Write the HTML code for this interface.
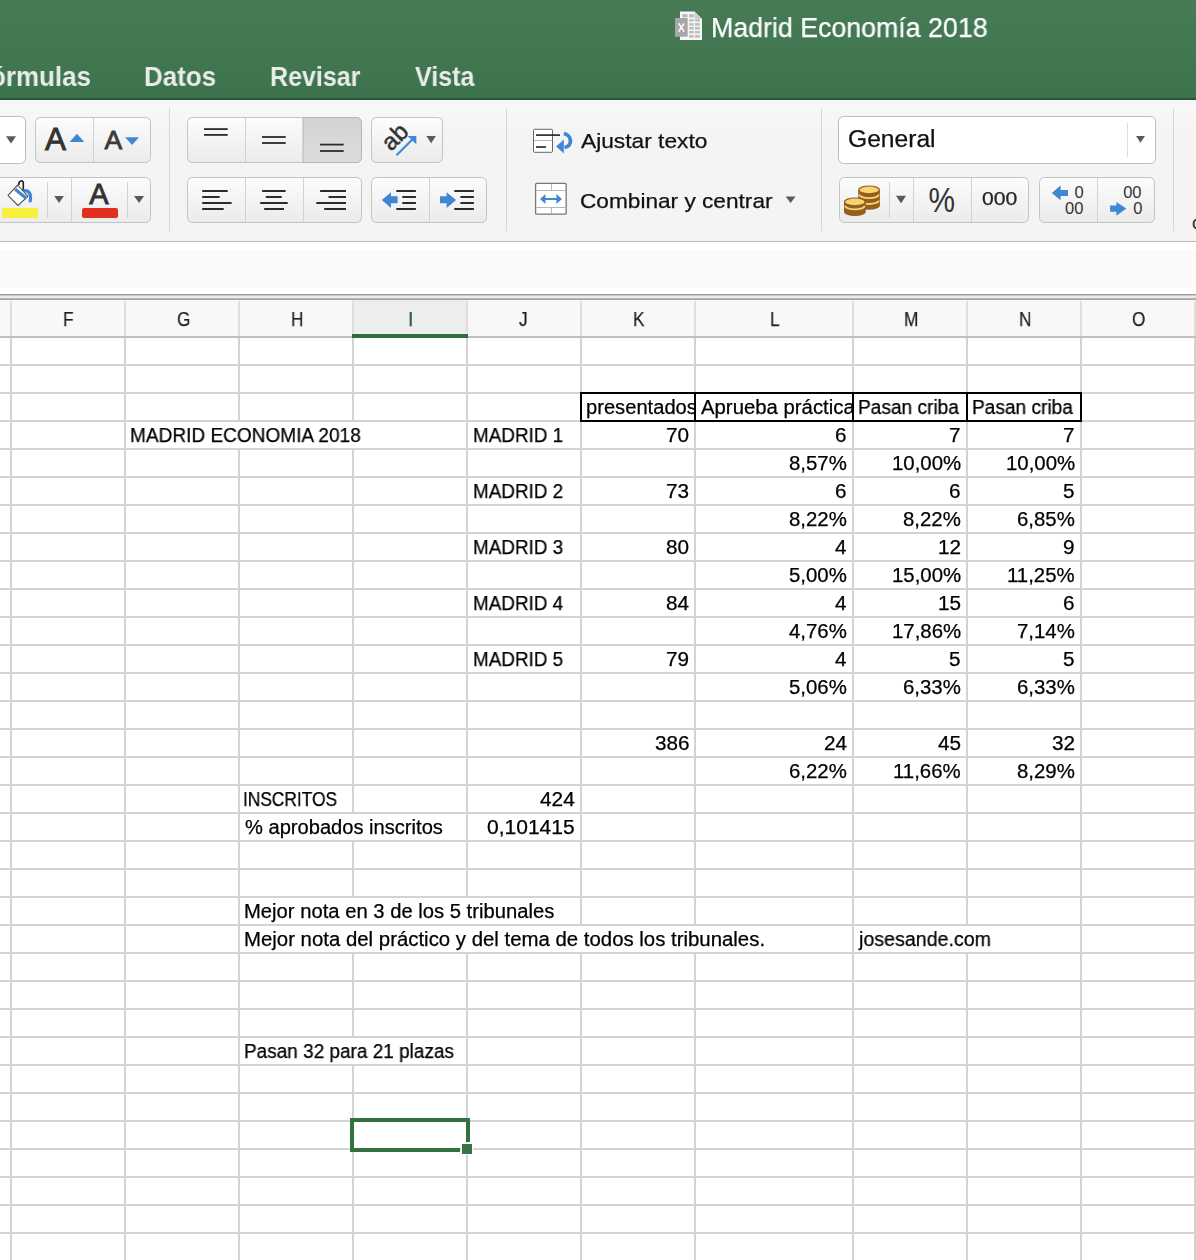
<!DOCTYPE html>
<html><head><meta charset="utf-8"><title>Madrid Economía 2018</title>
<style>
html,body{margin:0;padding:0}
body{width:1196px;height:1260px;overflow:hidden;position:relative;background:#fff;font-family:"Liberation Sans",sans-serif}
.a{position:absolute}
.t{position:absolute;white-space:pre;transform-origin:0 0;will-change:transform;-webkit-text-stroke:0.25px currentColor}
</style></head><body>
<div class="a" style="left:0;top:0;width:1196px;height:100px;background:linear-gradient(#467b56,#3d734c)"></div>
<div class="a" style="left:0;top:98px;width:1196px;height:2px;background:#27583a"></div>
<div class="a" style="left:0;top:100px;width:1196px;height:141px;background:linear-gradient(#f8f8f8 0px,#f4f4f4 34px,#f4f4f4 141px)"></div>
<div class="a" style="left:0;top:241px;width:1196px;height:1px;background:#bdbdbd"></div>
<div class="a" style="left:0;top:242px;width:1196px;height:52px;background:#fff"></div>
<div class="a" style="left:0;top:250px;width:1196px;height:38px;background:#fafafa"></div>
<div class="a" style="left:0;top:294px;width:1196px;height:1px;background:#9a9a9a"></div>
<div class="a" style="left:0;top:295px;width:1196px;height:1px;background:#c9c9c9"></div>
<div class="a" style="left:0;top:296px;width:1196px;height:2px;background:#ececec"></div>
<div class="a" style="left:0;top:298px;width:1196px;height:1px;background:#b8b8b8"></div>
<div class="a" style="left:0;top:299px;width:1196px;height:1px;background:#a2a2a2"></div>
<div class="a" style="left:0;top:300px;width:1196px;height:36px;background:#f8f8f8"></div>
<div class="a" style="left:352px;top:300px;width:116px;height:36px;background:#ededed"></div>
<div class="a" style="left:0;top:336px;width:1196px;height:2px;background:#bfbfbf"></div>
<svg class="a" style="left:0;top:100px" width="1196" height="141" viewBox="0 100 1196 141">
<defs><linearGradient id="bg" x1="0" y1="0" x2="0" y2="1"><stop offset="0" stop-color="#fcfcfc"/><stop offset="1" stop-color="#ebebeb"/></linearGradient><linearGradient id="pr" x1="0" y1="0" x2="0" y2="1"><stop offset="0" stop-color="#d3d3d3"/><stop offset="1" stop-color="#dcdcdc"/></linearGradient></defs>
<rect x="169" y="108" width="1" height="123" fill="#d7d7d7"/>
<rect x="506" y="108" width="1" height="123" fill="#d7d7d7"/>
<rect x="821" y="108" width="1" height="123" fill="#d7d7d7"/>
<rect x="1173" y="108" width="1" height="123" fill="#d7d7d7"/>
<rect x="-9.5" y="116.5" width="35" height="47" rx="5" fill="#fff" stroke="#bdbdbd" stroke-width="1"/>
<polygon points="6,136.3 16,136.3 11.0,143.4" fill="#5b5b5b"/>
<rect x="35.5" y="117.5" width="115" height="45" rx="5" fill="url(#bg)" stroke="#c3c3c3" stroke-width="1"/>
<rect x="93" y="118" width="1" height="44" fill="#d2d2d2"/>
<text x="45" y="150" font-family="Liberation Sans" font-size="31.5" fill="#333" stroke="#333" stroke-width="0.9">A</text>
<polygon points="69.6,142.1 84.3,142.1 76.94999999999999,133.8" fill="#3f86d3"/>
<text x="104.6" y="149.2" font-family="Liberation Sans" font-size="26.5" fill="#3a3a3a" stroke="#3a3a3a" stroke-width="0.8">A</text>
<polygon points="125.1,137.2 139.1,137.2 132.1,145" fill="#3f86d3"/>
<rect x="-9.5" y="177.5" width="160" height="45" rx="5" fill="url(#bg)" stroke="#c3c3c3" stroke-width="1"/>
<rect x="47" y="182" width="1" height="36" fill="#d2d2d2"/>
<rect x="71" y="178" width="1" height="44" fill="#d2d2d2"/>
<rect x="127" y="182" width="1" height="36" fill="#d2d2d2"/>
<polygon points="8,195.4 17.7,185 27.8,196.4 18,205.5" fill="#fff" stroke="#555" stroke-width="1.1" stroke-linejoin="round"/>
<line x1="15.2" y1="189.2" x2="26.4" y2="198.4" stroke="#3f86d3" stroke-width="3.2"/>
<path d="M19,185 C18,181 22.5,179.5 23.3,182.5 L23.3,191" fill="none" stroke="#222" stroke-width="1.6"/>
<path d="M24.6,190.6 C29,190.5 31.5,194 30.2,201" fill="none" stroke="#3f86d3" stroke-width="3.2" stroke-linecap="round"/>
<rect x="2" y="208" width="36" height="10" rx="1.5" fill="#f6f03c"/>
<polygon points="54.2,196.1 63.9,196.1 59.05,203.1" fill="#5b5b5b"/>
<text x="89.2" y="204" font-family="Liberation Sans" font-size="29" fill="#333" stroke="#333" stroke-width="0.9">A</text>
<rect x="82" y="208" width="36" height="10" rx="2" fill="#e2301e"/>
<polygon points="134,196 144.1,196 139.05,203.1" fill="#5b5b5b"/>
<rect x="187.5" y="117.5" width="174" height="45" rx="5" fill="url(#bg)" stroke="#c3c3c3" stroke-width="1"/>
<path d="M303,117.5 H356.5 A5,5 0 0 1 361.5,122.5 V157.5 A5,5 0 0 1 356.5,162.5 H303 Z" fill="url(#pr)" stroke="#b5b5b5" stroke-width="1"/>
<rect x="245" y="118" width="1" height="44" fill="#d2d2d2"/>
<rect x="204" y="128.2" width="23.69999999999999" height="1.8" fill="#2b2b2b"/>
<rect x="204" y="134" width="23.69999999999999" height="1.8" fill="#2b2b2b"/>
<rect x="262" y="136.1" width="23.69999999999999" height="1.8" fill="#2b2b2b"/>
<rect x="262" y="142.1" width="23.69999999999999" height="1.8" fill="#2b2b2b"/>
<rect x="320" y="143.7" width="23.69999999999999" height="1.8" fill="#2b2b2b"/>
<rect x="320" y="150.1" width="23.69999999999999" height="1.8" fill="#2b2b2b"/>
<rect x="371.5" y="117.5" width="71" height="45" rx="5" fill="url(#bg)" stroke="#c3c3c3" stroke-width="1"/>
<text x="0" y="0" font-family="Liberation Sans" font-size="24" fill="#333" stroke="#333" stroke-width="0.5" transform="translate(391,152) rotate(-45)">ab</text>
<line x1="396.5" y1="155.3" x2="412" y2="139.8" stroke="#3f86d3" stroke-width="2.2"/>
<polygon points="407.5,136 416.3,136 416.3,144.3" fill="#3f86d3"/>
<polygon points="426.4,136 435.9,136 431.15,143.2" fill="#5b5b5b"/>
<rect x="187.5" y="177.5" width="174" height="45" rx="5" fill="url(#bg)" stroke="#c3c3c3" stroke-width="1"/>
<rect x="245" y="178" width="1" height="44" fill="#d2d2d2"/>
<rect x="303" y="178" width="1" height="44" fill="#d2d2d2"/>
<rect x="202.2" y="190" width="25.5" height="2" fill="#2b2b2b"/>
<rect x="202.2" y="196" width="17.5" height="2" fill="#2b2b2b"/>
<rect x="202.2" y="202" width="29.400000000000006" height="2" fill="#2b2b2b"/>
<rect x="202.2" y="208" width="21.5" height="2" fill="#2b2b2b"/>
<rect x="262.1" y="190" width="23.5" height="2" fill="#2b2b2b"/>
<rect x="265.8" y="196" width="15.899999999999977" height="2" fill="#2b2b2b"/>
<rect x="260.2" y="202" width="27.5" height="2" fill="#2b2b2b"/>
<rect x="264.2" y="208" width="19.80000000000001" height="2" fill="#2b2b2b"/>
<rect x="320.1" y="190" width="25.899999999999977" height="2" fill="#2b2b2b"/>
<rect x="328.5" y="196" width="17.5" height="2" fill="#2b2b2b"/>
<rect x="316.3" y="202" width="29.69999999999999" height="2" fill="#2b2b2b"/>
<rect x="324.2" y="208" width="21.80000000000001" height="2" fill="#2b2b2b"/>
<rect x="371.5" y="177.5" width="115" height="45" rx="5" fill="url(#bg)" stroke="#c3c3c3" stroke-width="1"/>
<rect x="429" y="178" width="1" height="44" fill="#d2d2d2"/>
<polygon points="381.8,199.9 391,192.3 391,196.3 397.6,196.3 397.6,203.3 391,203.3 391,208 " fill="#3f86d3"/>
<rect x="396.3" y="190" width="19.599999999999966" height="2" fill="#2b2b2b"/>
<rect x="402.3" y="196" width="13.599999999999966" height="2" fill="#2b2b2b"/>
<rect x="402.3" y="202" width="13.599999999999966" height="2" fill="#2b2b2b"/>
<rect x="396.3" y="208" width="19.599999999999966" height="2" fill="#2b2b2b"/>
<polygon points="456.1,199.9 446.6,192.3 446.6,196.3 440,196.3 440,203.3 446.6,203.3 446.6,208" fill="#3f86d3"/>
<rect x="454.3" y="190" width="19.599999999999966" height="2" fill="#2b2b2b"/>
<rect x="460.4" y="196" width="13.5" height="2" fill="#2b2b2b"/>
<rect x="460.4" y="202" width="13.5" height="2" fill="#2b2b2b"/>
<rect x="454.3" y="208" width="19.599999999999966" height="2" fill="#2b2b2b"/>
<rect x="533.5" y="129.3" width="19" height="23" rx="1" fill="#fff" stroke="#666" stroke-width="1"/>
<rect x="534" y="140" width="18" height="1" fill="#b5b5b5"/>
<rect x="536" y="134.3" width="24" height="1.6" fill="#222"/>
<rect x="536" y="146.2" width="10" height="1.6" fill="#222"/>
<path d="M563.8,133.6 C571.5,134.5 573.5,146 564.5,147.5" fill="none" stroke="#3f86d3" stroke-width="3.8"/>
<polygon points="556.2,146.6 563.8,139.6 563.8,153.6" fill="#3f86d3"/>
<rect x="535.6" y="183.4" width="30.6" height="30.8" rx="1" fill="#fff" stroke="#777" stroke-width="1.3"/>
<rect x="536" y="190" width="30" height="1" fill="#b8b8b8"/><rect x="536" y="207" width="30" height="1" fill="#b8b8b8"/>
<rect x="551" y="184" width="1" height="6" fill="#b8b8b8"/><rect x="551" y="208" width="1" height="6" fill="#b8b8b8"/>
<polygon points="540,199.1 545.5,194 545.5,198.1 556.4,198.1 556.4,194 561.9,199.1 556.4,204 556.4,200.1 545.5,200.1 545.5,204" fill="#3f86d3"/>
<polygon points="785.6,196.6 795.6,196.6 790.6,203" fill="#5b5b5b"/>
<rect x="838.5" y="116.5" width="317" height="47" rx="5" fill="#fff" stroke="#bdbdbd" stroke-width="1"/>
<rect x="1127" y="123" width="1" height="34" fill="#dedede"/>
<polygon points="1136,136 1145,136 1140.5,142.8" fill="#5b5b5b"/>
<rect x="839.5" y="177.5" width="189" height="45" rx="5" fill="url(#bg)" stroke="#c3c3c3" stroke-width="1"/>
<rect x="889" y="182" width="1" height="36" fill="#d2d2d2"/>
<rect x="913" y="178" width="1" height="44" fill="#d2d2d2"/>
<rect x="971" y="178" width="1" height="44" fill="#d2d2d2"/>
<path d="M858.2,189.9 V205.7 A10.849999999999966,4 0 0 0 879.9,205.7 V189.9 Z" fill="#925f20"/><path d="M859.4000000000001,194.6 A9.649999999999967,3.6 0 0 0 878.6999999999999,194.6" fill="none" stroke="#f5d471" stroke-width="1.8"/><path d="M859.4000000000001,200.4 A9.649999999999967,3.6 0 0 0 878.6999999999999,200.4" fill="none" stroke="#f5d471" stroke-width="1.8"/><ellipse cx="869.05" cy="189.9" rx="10.249999999999966" ry="3.9" fill="#f5d471" stroke="#925f20" stroke-width="1.2"/>
<path d="M844,201.9 V211.9 A10.899999999999977,4 0 0 0 865.8,211.9 V201.9 Z" fill="#925f20"/><path d="M845.2,205.8 A9.699999999999978,3.6 0 0 0 864.5999999999999,205.8" fill="none" stroke="#f5d471" stroke-width="1.8"/><ellipse cx="854.9" cy="201.9" rx="10.299999999999978" ry="3.9" fill="#f5d471" stroke="#925f20" stroke-width="1.2"/>
<polygon points="896,195.8 906,195.8 901.0,203.4" fill="#5b5b5b"/>
<text x="928.4" y="211.8" font-family="Liberation Sans" font-size="35" fill="#333" textLength="26.5" lengthAdjust="spacingAndGlyphs">%</text>
<rect x="1039.5" y="177.5" width="115" height="45" rx="5" fill="url(#bg)" stroke="#c3c3c3" stroke-width="1"/>
<rect x="1097" y="178" width="1" height="44" fill="#d2d2d2"/>
<polygon points="1051.8,192.9 1060.6,185.5 1060.6,189.9 1068,189.9 1068,196 1060.6,196 1060.6,200.3" fill="#3f86d3"/>
<polygon points="1126.3,208.6 1116.4,201.9 1116.4,205.6 1110.1,205.6 1110.1,211.8 1116.4,211.8 1116.4,215.7" fill="#3f86d3"/>
<text x="1074.6" y="197.8" font-family="Liberation Sans" font-size="16.5" fill="#333">0</text>
<text x="1065" y="213.9" font-family="Liberation Sans" font-size="16.5" fill="#333">00</text>
<text x="1123.2" y="197.8" font-family="Liberation Sans" font-size="16.5" fill="#333">00</text>
<text x="1133.2" y="213.9" font-family="Liberation Sans" font-size="16.5" fill="#333">0</text>
<text x="1192" y="228.8" font-family="Liberation Sans" font-size="18" fill="#222">c</text>
</svg><svg class="a" style="left:0;top:0" width="1196" height="100"><polygon points="680,11.5 694.5,11.5 702,19 702,40 680,40" fill="#f7f7f7"/><polygon points="694.5,11.5 694.5,19 702,19" fill="#cfcfcf"/><rect x="682.2" y="14.1" width="5.2999999999999545" height="3.3" fill="#b9b9b9"/><rect x="689.2" y="14.1" width="4.599999999999909" height="3.3" fill="#b9b9b9"/><rect x="689.2" y="19.2" width="4.599999999999909" height="2.400000000000002" fill="#bdbdbd"/><rect x="695" y="19.2" width="4.7999999999999545" height="2.400000000000002" fill="#bdbdbd"/><rect x="689.2" y="23.1" width="4.599999999999909" height="2.599999999999998" fill="#bdbdbd"/><rect x="695" y="23.1" width="4.7999999999999545" height="2.599999999999998" fill="#bdbdbd"/><rect x="689.2" y="27" width="4.599999999999909" height="2.5" fill="#bdbdbd"/><rect x="695" y="27" width="4.7999999999999545" height="2.5" fill="#bdbdbd"/><rect x="689.2" y="31" width="4.599999999999909" height="2.3999999999999986" fill="#bdbdbd"/><rect x="695" y="31" width="4.7999999999999545" height="2.3999999999999986" fill="#bdbdbd"/><rect x="689.2" y="35" width="4.599999999999909" height="2.6000000000000014" fill="#bdbdbd"/><rect x="695" y="35" width="4.7999999999999545" height="2.6000000000000014" fill="#bdbdbd"/><rect x="675" y="18.1" width="12.7" height="18.6" rx="0.8" fill="#a8a8a8"/><path d="M678.6,23.4 L684.2,31.6 M684.2,23.4 L678.6,31.6" stroke="#fff" stroke-width="1.6"/></svg>
<svg class="a" style="left:0;top:0" width="1196" height="1260" shape-rendering="crispEdges">
<rect x="0" y="364" width="1196" height="2" fill="#d3d3d3"/>
<rect x="0" y="392" width="1196" height="2" fill="#d3d3d3"/>
<rect x="0" y="420" width="1196" height="2" fill="#d3d3d3"/>
<rect x="0" y="448" width="1196" height="2" fill="#d3d3d3"/>
<rect x="0" y="476" width="1196" height="2" fill="#d3d3d3"/>
<rect x="0" y="504" width="1196" height="2" fill="#d3d3d3"/>
<rect x="0" y="532" width="1196" height="2" fill="#d3d3d3"/>
<rect x="0" y="560" width="1196" height="2" fill="#d3d3d3"/>
<rect x="0" y="588" width="1196" height="2" fill="#d3d3d3"/>
<rect x="0" y="616" width="1196" height="2" fill="#d3d3d3"/>
<rect x="0" y="644" width="1196" height="2" fill="#d3d3d3"/>
<rect x="0" y="672" width="1196" height="2" fill="#d3d3d3"/>
<rect x="0" y="700" width="1196" height="2" fill="#d3d3d3"/>
<rect x="0" y="728" width="1196" height="2" fill="#d3d3d3"/>
<rect x="0" y="756" width="1196" height="2" fill="#d3d3d3"/>
<rect x="0" y="784" width="1196" height="2" fill="#d3d3d3"/>
<rect x="0" y="812" width="1196" height="2" fill="#d3d3d3"/>
<rect x="0" y="840" width="1196" height="2" fill="#d3d3d3"/>
<rect x="0" y="868" width="1196" height="2" fill="#d3d3d3"/>
<rect x="0" y="896" width="1196" height="2" fill="#d3d3d3"/>
<rect x="0" y="924" width="1196" height="2" fill="#d3d3d3"/>
<rect x="0" y="952" width="1196" height="2" fill="#d3d3d3"/>
<rect x="0" y="980" width="1196" height="2" fill="#d3d3d3"/>
<rect x="0" y="1008" width="1196" height="2" fill="#d3d3d3"/>
<rect x="0" y="1036" width="1196" height="2" fill="#d3d3d3"/>
<rect x="0" y="1064" width="1196" height="2" fill="#d3d3d3"/>
<rect x="0" y="1092" width="1196" height="2" fill="#d3d3d3"/>
<rect x="0" y="1120" width="1196" height="2" fill="#d3d3d3"/>
<rect x="0" y="1148" width="1196" height="2" fill="#d3d3d3"/>
<rect x="0" y="1176" width="1196" height="2" fill="#d3d3d3"/>
<rect x="0" y="1204" width="1196" height="2" fill="#d3d3d3"/>
<rect x="0" y="1232" width="1196" height="2" fill="#d3d3d3"/>
<rect x="10" y="338" width="2" height="922" fill="#d3d3d3"/>
<rect x="124" y="338" width="2" height="922" fill="#d3d3d3"/>
<rect x="238" y="338" width="2" height="922" fill="#d3d3d3"/>
<rect x="238" y="422" width="2" height="26" fill="#fff"/>
<rect x="352" y="338" width="2" height="922" fill="#d3d3d3"/>
<rect x="352" y="422" width="2" height="26" fill="#fff"/>
<rect x="352" y="814" width="2" height="26" fill="#fff"/>
<rect x="352" y="898" width="2" height="26" fill="#fff"/>
<rect x="352" y="926" width="2" height="26" fill="#fff"/>
<rect x="352" y="1038" width="2" height="26" fill="#fff"/>
<rect x="466" y="338" width="2" height="922" fill="#d3d3d3"/>
<rect x="466" y="898" width="2" height="26" fill="#fff"/>
<rect x="466" y="926" width="2" height="26" fill="#fff"/>
<rect x="580" y="338" width="2" height="922" fill="#d3d3d3"/>
<rect x="580" y="926" width="2" height="26" fill="#fff"/>
<rect x="694" y="338" width="2" height="922" fill="#d3d3d3"/>
<rect x="694" y="926" width="2" height="26" fill="#fff"/>
<rect x="852" y="338" width="2" height="922" fill="#d3d3d3"/>
<rect x="966" y="338" width="2" height="922" fill="#d3d3d3"/>
<rect x="966" y="926" width="2" height="26" fill="#fff"/>
<rect x="1080" y="338" width="2" height="922" fill="#d3d3d3"/>
<rect x="1194" y="338" width="2" height="922" fill="#d3d3d3"/>
</svg>
<svg class="a" style="left:0;top:300px" width="1196" height="36" shape-rendering="crispEdges">
<rect x="10" y="1" width="2" height="35" fill="#dedede"/><rect x="124" y="1" width="2" height="35" fill="#dedede"/><rect x="238" y="1" width="2" height="35" fill="#dedede"/><rect x="352" y="1" width="2" height="35" fill="#dedede"/><rect x="466" y="1" width="2" height="35" fill="#dedede"/><rect x="580" y="1" width="2" height="35" fill="#dedede"/><rect x="694" y="1" width="2" height="35" fill="#dedede"/><rect x="852" y="1" width="2" height="35" fill="#dedede"/><rect x="966" y="1" width="2" height="35" fill="#dedede"/><rect x="1080" y="1" width="2" height="35" fill="#dedede"/><rect x="1194" y="1" width="2" height="35" fill="#dedede"/>
</svg>
<div class="a" style="left:352px;top:334px;width:116px;height:4px;background:#2f6c40"></div>
<!-- black borders -->
<div class="a" style="left:580px;top:392px;width:502px;height:2px;background:#000"></div>
<div class="a" style="left:580px;top:420px;width:502px;height:2px;background:#000"></div>
<div class="a" style="left:580px;top:392px;width:2px;height:30px;background:#000"></div><div class="a" style="left:694px;top:392px;width:2px;height:30px;background:#000"></div><div class="a" style="left:852px;top:392px;width:2px;height:30px;background:#000"></div><div class="a" style="left:966px;top:392px;width:2px;height:30px;background:#000"></div><div class="a" style="left:1080px;top:392px;width:2px;height:30px;background:#000"></div>
<!-- selection -->
<div class="a" style="left:350px;top:1118px;width:120px;height:4px;background:#33703f"></div>
<div class="a" style="left:350px;top:1118px;width:4px;height:34px;background:#33703f"></div>
<div class="a" style="left:350px;top:1148px;width:110px;height:4px;background:#33703f"></div>
<div class="a" style="left:466px;top:1118px;width:4px;height:24px;background:#33703f"></div>
<div class="a" style="left:461px;top:1143px;width:12px;height:12px;background:#fff"></div>
<div class="a" style="left:462px;top:1144px;width:10px;height:10px;background:#3a7348"></div>
<span class="t" style="left:129.95px;top:425px;font-size:20px;line-height:20px;color:#000;transform:scaleX(0.9523);">MADRID ECONOMIA 2018</span>
<span class="t" style="left:472.56px;top:425px;font-size:20px;line-height:20px;color:#000;transform:scaleX(0.9426);">MADRID 1</span>
<span class="t" style="left:472.56px;top:481px;font-size:20px;line-height:20px;color:#000;transform:scaleX(0.9426);">MADRID 2</span>
<span class="t" style="left:472.56px;top:537px;font-size:20px;line-height:20px;color:#000;transform:scaleX(0.9426);">MADRID 3</span>
<span class="t" style="left:472.56px;top:593px;font-size:20px;line-height:20px;color:#000;transform:scaleX(0.9426);">MADRID 4</span>
<span class="t" style="left:472.56px;top:649px;font-size:20px;line-height:20px;color:#000;transform:scaleX(0.9426);">MADRID 5</span>
<div class="a" style="left:581px;top:393px;width:113px;height:30px;overflow:hidden"><div class="a" style="left:-581px;top:-393px;width:1196px;height:60px"><span class="t" style="left:586.19px;top:397px;font-size:20px;line-height:20px;color:#000;transform:scaleX(1.0073);">presentados</span></div></div>
<div class="a" style="left:695px;top:393px;width:157px;height:30px;overflow:hidden"><div class="a" style="left:-695px;top:-393px;width:1196px;height:60px"><span class="t" style="left:700.50px;top:397px;font-size:20px;line-height:20px;color:#000;transform:scaleX(1.0166);">Aprueba práctica</span></div></div>
<span class="t" style="left:857.64px;top:397px;font-size:20px;line-height:20px;color:#000;transform:scaleX(0.9552);">Pasan criba</span>
<span class="t" style="left:972.24px;top:397px;font-size:20px;line-height:20px;color:#000;transform:scaleX(0.9552);">Pasan criba</span>
<span class="t" style="left:665.93px;top:425px;font-size:20px;line-height:20px;color:#000;transform:scaleX(1.0350);">70</span>
<span class="t" style="left:835.12px;top:425px;font-size:20px;line-height:20px;color:#000;transform:scaleX(1.0350);">6</span>
<span class="t" style="left:949.12px;top:425px;font-size:20px;line-height:20px;color:#000;transform:scaleX(1.0350);">7</span>
<span class="t" style="left:1063.12px;top:425px;font-size:20px;line-height:20px;color:#000;transform:scaleX(1.0350);">7</span>
<span class="t" style="left:789.38px;top:453px;font-size:20px;line-height:20px;color:#000;transform:scaleX(1.0200);">8,57%</span>
<span class="t" style="left:892.16px;top:453px;font-size:20px;line-height:20px;color:#000;transform:scaleX(1.0200);">10,00%</span>
<span class="t" style="left:1006.16px;top:453px;font-size:20px;line-height:20px;color:#000;transform:scaleX(1.0200);">10,00%</span>
<span class="t" style="left:665.93px;top:481px;font-size:20px;line-height:20px;color:#000;transform:scaleX(1.0350);">73</span>
<span class="t" style="left:835.12px;top:481px;font-size:20px;line-height:20px;color:#000;transform:scaleX(1.0350);">6</span>
<span class="t" style="left:949.12px;top:481px;font-size:20px;line-height:20px;color:#000;transform:scaleX(1.0350);">6</span>
<span class="t" style="left:1063.12px;top:481px;font-size:20px;line-height:20px;color:#000;transform:scaleX(1.0350);">5</span>
<span class="t" style="left:789.38px;top:509px;font-size:20px;line-height:20px;color:#000;transform:scaleX(1.0200);">8,22%</span>
<span class="t" style="left:903.38px;top:509px;font-size:20px;line-height:20px;color:#000;transform:scaleX(1.0200);">8,22%</span>
<span class="t" style="left:1017.38px;top:509px;font-size:20px;line-height:20px;color:#000;transform:scaleX(1.0200);">6,85%</span>
<span class="t" style="left:665.93px;top:537px;font-size:20px;line-height:20px;color:#000;transform:scaleX(1.0350);">80</span>
<span class="t" style="left:835.12px;top:537px;font-size:20px;line-height:20px;color:#000;transform:scaleX(1.0350);">4</span>
<span class="t" style="left:937.73px;top:537px;font-size:20px;line-height:20px;color:#000;transform:scaleX(1.0350);">12</span>
<span class="t" style="left:1063.12px;top:537px;font-size:20px;line-height:20px;color:#000;transform:scaleX(1.0350);">9</span>
<span class="t" style="left:789.38px;top:565px;font-size:20px;line-height:20px;color:#000;transform:scaleX(1.0200);">5,00%</span>
<span class="t" style="left:892.16px;top:565px;font-size:20px;line-height:20px;color:#000;transform:scaleX(1.0200);">15,00%</span>
<span class="t" style="left:1007.18px;top:565px;font-size:20px;line-height:20px;color:#000;transform:scaleX(1.0200);">11,25%</span>
<span class="t" style="left:665.93px;top:593px;font-size:20px;line-height:20px;color:#000;transform:scaleX(1.0350);">84</span>
<span class="t" style="left:835.12px;top:593px;font-size:20px;line-height:20px;color:#000;transform:scaleX(1.0350);">4</span>
<span class="t" style="left:937.73px;top:593px;font-size:20px;line-height:20px;color:#000;transform:scaleX(1.0350);">15</span>
<span class="t" style="left:1063.12px;top:593px;font-size:20px;line-height:20px;color:#000;transform:scaleX(1.0350);">6</span>
<span class="t" style="left:789.38px;top:621px;font-size:20px;line-height:20px;color:#000;transform:scaleX(1.0200);">4,76%</span>
<span class="t" style="left:892.16px;top:621px;font-size:20px;line-height:20px;color:#000;transform:scaleX(1.0200);">17,86%</span>
<span class="t" style="left:1017.38px;top:621px;font-size:20px;line-height:20px;color:#000;transform:scaleX(1.0200);">7,14%</span>
<span class="t" style="left:665.93px;top:649px;font-size:20px;line-height:20px;color:#000;transform:scaleX(1.0350);">79</span>
<span class="t" style="left:835.12px;top:649px;font-size:20px;line-height:20px;color:#000;transform:scaleX(1.0350);">4</span>
<span class="t" style="left:949.12px;top:649px;font-size:20px;line-height:20px;color:#000;transform:scaleX(1.0350);">5</span>
<span class="t" style="left:1063.12px;top:649px;font-size:20px;line-height:20px;color:#000;transform:scaleX(1.0350);">5</span>
<span class="t" style="left:789.38px;top:677px;font-size:20px;line-height:20px;color:#000;transform:scaleX(1.0200);">5,06%</span>
<span class="t" style="left:903.38px;top:677px;font-size:20px;line-height:20px;color:#000;transform:scaleX(1.0200);">6,33%</span>
<span class="t" style="left:1017.38px;top:677px;font-size:20px;line-height:20px;color:#000;transform:scaleX(1.0200);">6,33%</span>
<span class="t" style="left:654.55px;top:733px;font-size:20px;line-height:20px;color:#000;transform:scaleX(1.0350);">386</span>
<span class="t" style="left:823.73px;top:733px;font-size:20px;line-height:20px;color:#000;transform:scaleX(1.0350);">24</span>
<span class="t" style="left:937.73px;top:733px;font-size:20px;line-height:20px;color:#000;transform:scaleX(1.0350);">45</span>
<span class="t" style="left:1051.73px;top:733px;font-size:20px;line-height:20px;color:#000;transform:scaleX(1.0350);">32</span>
<span class="t" style="left:789.38px;top:761px;font-size:20px;line-height:20px;color:#000;transform:scaleX(1.0200);">6,22%</span>
<span class="t" style="left:893.18px;top:761px;font-size:20px;line-height:20px;color:#000;transform:scaleX(1.0200);">11,66%</span>
<span class="t" style="left:1017.38px;top:761px;font-size:20px;line-height:20px;color:#000;transform:scaleX(1.0200);">8,29%</span>
<span class="t" style="left:243.17px;top:789px;font-size:20px;line-height:20px;color:#000;transform:scaleX(0.8660);">INSCRITOS</span>
<span class="t" style="left:539.98px;top:789px;font-size:20px;line-height:20px;color:#000;transform:scaleX(1.0400);">424</span>
<span class="t" style="left:244.90px;top:817px;font-size:20px;line-height:20px;color:#000;transform:scaleX(1.0056);">% aprobados inscritos</span>
<span class="t" style="left:486.60px;top:817px;font-size:20px;line-height:20px;color:#000;transform:scaleX(1.0506);">0,101415</span>
<span class="t" style="left:243.89px;top:901px;font-size:20px;line-height:20px;color:#000;transform:scaleX(1.0111);">Mejor nota en 3 de los 5 tribunales</span>
<span class="t" style="left:243.88px;top:929px;font-size:20px;line-height:20px;color:#000;transform:scaleX(1.0189);">Mejor nota del práctico y del tema de todos los tribunales.</span>
<span class="t" style="left:858.98px;top:929px;font-size:20px;line-height:20px;color:#000;transform:scaleX(0.9815);">josesande.com</span>
<span class="t" style="left:244.05px;top:1041px;font-size:20px;line-height:20px;color:#000;transform:scaleX(0.9486);">Pasan 32 para 21 plazas</span>
<span class="t" style="left:63.41px;top:309px;font-size:20px;line-height:20px;color:#1e1e1e;transform:scaleX(0.8600);">F</span>
<span class="t" style="left:176.55px;top:309px;font-size:20px;line-height:20px;color:#1e1e1e;transform:scaleX(0.8600);">G</span>
<span class="t" style="left:290.98px;top:309px;font-size:20px;line-height:20px;color:#1e1e1e;transform:scaleX(0.8600);">H</span>
<span class="t" style="left:408.00px;top:309px;font-size:20px;line-height:20px;color:#2c6a3c;">I</span>
<span class="t" style="left:519.13px;top:309px;font-size:20px;line-height:20px;color:#1e1e1e;transform:scaleX(0.8600);">J</span>
<span class="t" style="left:632.98px;top:309px;font-size:20px;line-height:20px;color:#1e1e1e;transform:scaleX(0.8600);">K</span>
<span class="t" style="left:769.84px;top:309px;font-size:20px;line-height:20px;color:#1e1e1e;transform:scaleX(0.8600);">L</span>
<span class="t" style="left:904.12px;top:309px;font-size:20px;line-height:20px;color:#1e1e1e;transform:scaleX(0.8600);">M</span>
<span class="t" style="left:1018.98px;top:309px;font-size:20px;line-height:20px;color:#1e1e1e;transform:scaleX(0.8600);">N</span>
<span class="t" style="left:1132.12px;top:309px;font-size:20px;line-height:20px;color:#1e1e1e;transform:scaleX(0.8600);">O</span>
<span class="t" style="left:710.52px;top:15px;font-size:27px;line-height:27px;color:#fff;transform:scaleX(0.9909);">Madrid Economía 2018</span>
<span class="t" style="left:144.14px;top:64px;font-size:27px;line-height:27px;color:#e9ece9;font-weight:bold;-webkit-text-stroke:0;transform:scaleX(0.9616);">Datos</span>
<span class="t" style="left:-10.41px;top:64px;font-size:27px;line-height:27px;color:#e9ece9;font-weight:bold;-webkit-text-stroke:0;transform:scaleX(0.9616);">órmulas</span>
<span class="t" style="left:270.37px;top:64px;font-size:27px;line-height:27px;color:#e9ece9;font-weight:bold;-webkit-text-stroke:0;transform:scaleX(0.9268);">Revisar</span>
<span class="t" style="left:415.20px;top:64px;font-size:27px;line-height:27px;color:#e9ece9;font-weight:bold;-webkit-text-stroke:0;transform:scaleX(0.9277);">Vista</span>
<span class="t" style="left:581.00px;top:130px;font-size:21px;line-height:21px;color:#111;transform:scaleX(1.0828);">Ajustar texto</span>
<span class="t" style="left:579.92px;top:190px;font-size:21px;line-height:21px;color:#111;transform:scaleX(1.0781);">Combinar y centrar</span>
<span class="t" style="left:847.93px;top:128px;font-size:23px;line-height:23px;color:#111;transform:scaleX(1.0700);">General</span>
<span class="t" style="left:981.70px;top:189px;font-size:19px;line-height:19px;color:#222;transform:scaleX(1.1129);">000</span>
</body></html>
